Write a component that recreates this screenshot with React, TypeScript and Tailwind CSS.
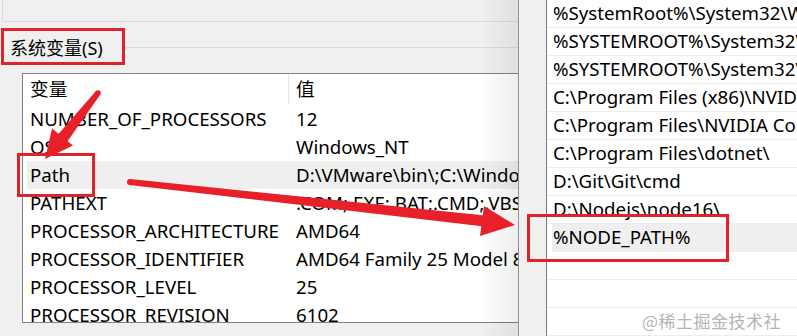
import React from "react";

const font = "font-['Segoe_UI','Noto_Sans','Noto_Sans_CJK_SC',sans-serif]";

const sysVars: [string, string][] = [
  ["NUMBER_OF_PROCESSORS", "12"],
  ["OS", "Windows_NT"],
  ["Path", "D:\\VMware\\bin\\;C:\\Windows\\system32;C:\\Windows"],
  ["PATHEXT", ".COM;.EXE;.BAT;.CMD;.VBS;.VBE;.JS"],
  ["PROCESSOR_ARCHITECTURE", "AMD64"],
  ["PROCESSOR_IDENTIFIER", "AMD64 Family 25 Model 80 Stepping 0"],
  ["PROCESSOR_LEVEL", "25"],
  ["PROCESSOR_REVISION", "6102"],
];

const pathItems = [
  "%SystemRoot%\\System32\\WindowsPowerShell\\v1.0\\",
  "%SYSTEMROOT%\\System32\\OpenSSH\\",
  "%SYSTEMROOT%\\System32\\WindowsPowerShell\\",
  "C:\\Program Files (x86)\\NVIDIA Corporation\\PhysX\\Common",
  "C:\\Program Files\\NVIDIA Corporation\\NVIDIA NvDLISR",
  "C:\\Program Files\\dotnet\\",
  "D:\\Git\\Git\\cmd",
  "D:\\Nodejs\\node16\\",
  "%NODE_PATH%",
  "",
  "",
  "",
];

const Annotations: React.FC = () => (
  <svg className="absolute inset-0 pointer-events-none" width="797" height="336" viewBox="0 0 797 336">
    <g fill="none" stroke="#e0232b" strokeWidth="3">
      <rect x="2.5" y="29.5" width="121" height="34" />
      <rect x="18.5" y="154.5" width="75" height="41" />
      <rect x="528.5" y="215.5" width="199" height="45" />
    </g>
    <g fill="#e8202a">
      {/* arrow to Path */}
      <polygon points="96,91 100,95 67,142 58,134.5" />
      <circle cx="98" cy="93" r="2.8" />
      <polygon points="45,159 52,128.5 73,145.5" />
      {/* arrow to %NODE_PATH% */}
      <polygon points="130,179 129.6,185 484,226.5 485,215.5" />
      <circle cx="130" cy="182" r="3" />
      <polygon points="515,225 484,206 480,236" />
    </g>
  </svg>
);

export default function App() {
  return (
    <div className={`relative w-[797px] h-[336px] overflow-hidden bg-[#f0f0f0] text-black ${font} flex`}>
      {/* environment variables dialog (behind) */}
      <div className="w-[518px] shrink-0 flex flex-col overflow-hidden">
        <div className="h-[22px] ml-[2px] border-l border-b border-[#dadada]" />
        <div className="h-[51px] flex items-center">
          <span className="pl-[10px] pr-[22px] text-[18px] leading-none whitespace-nowrap">系统变量(S)</span>
          <div className="flex-1 h-px bg-[#dadada]" />
        </div>
        <div className="ml-[22px] h-[250px] bg-white border-t border-l border-b border-[#828282] overflow-hidden text-[18.7px] whitespace-nowrap">
          <div className="h-[31px] flex items-center">
            <div className="w-[266px] shrink-0 pl-[7px] h-full flex items-center border-r border-[#e5e5e5]">变量</div>
            <div className="pl-[7px]">值</div>
          </div>
          {sysVars.map(([name, value]) => (
            <div
              key={name}
              className={`h-[28px] flex items-center ${name === "Path" ? "bg-[#efefef] ml-[4px]" : ""}`}
            >
              <div className={`${name === "Path" ? "w-[262px] pl-[3px]" : "w-[266px] pl-[7px]"} shrink-0 overflow-hidden`}>
                {name}
              </div>
              <div className="pl-[7px] shrink-0">{value}</div>
            </div>
          ))}
        </div>
      </div>

      {/* edit environment variable dialog (front) */}
      <div className="relative flex-1 border-l border-[#9c9c9c] flex">
        <div className="absolute -left-[40px] top-0 bottom-0 w-[40px] bg-gradient-to-r from-transparent to-black/[0.07]" />
        <div className="w-[27px] shrink-0" />
        <div className="flex-1 bg-white border-l border-[#7a7a7a] text-[18.7px] whitespace-nowrap overflow-hidden">
          {pathItems.map((p, i) => (
            <div
              key={i}
              className={`h-[28px] flex items-center border-b border-[#ededed] pl-[6px] ${p === "%NODE_PATH%" ? "bg-[#efefef] ml-[5px] pl-px" : ""}`}
            >
              {p}
            </div>
          ))}
        </div>
      </div>

      <span className="absolute left-[642px] top-[308px] text-[17px] text-[#b4b4b4] font-['Noto_Sans_CJK_SC',serif] tracking-[0.5px]">
        @稀土掘金技术社区
      </span>

      <Annotations />
    </div>
  );
}
